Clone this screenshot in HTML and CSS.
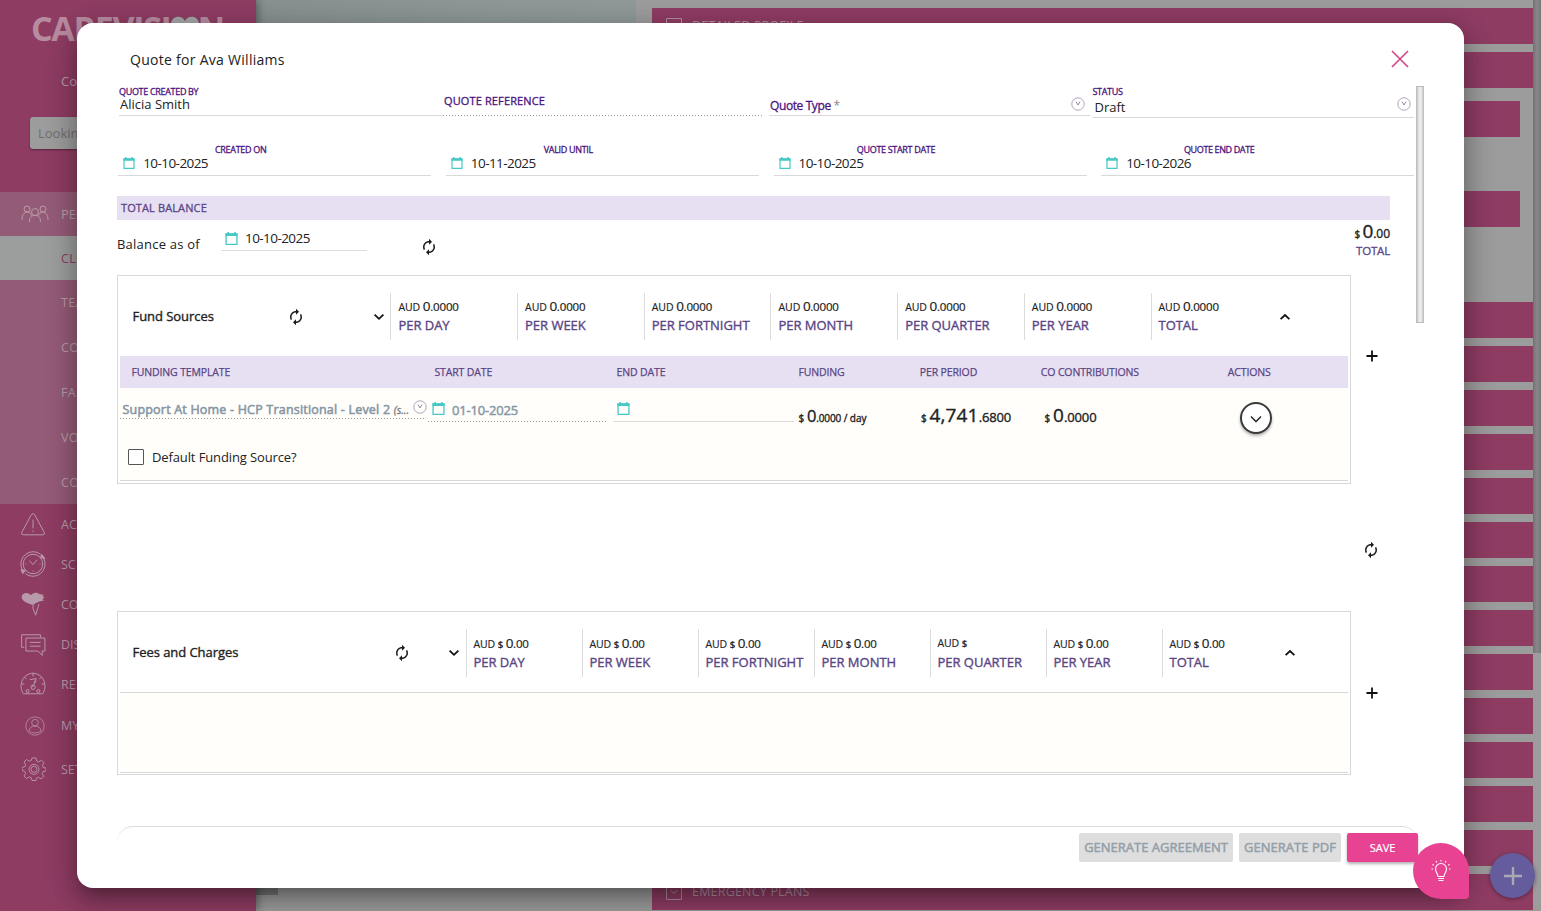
FILE: index.html
```html
<!DOCTYPE html>
<html lang="en">
<head>
<meta charset="utf-8">
<title>Quote for Ava Williams</title>
<link rel="stylesheet" href="styles.css">
</head>
<body>
<svg class="defs" width="0" height="0">
  <symbol id="cal" viewBox="0 0 12 12"><path d="M1 2h10v9.4H1z" fill="none" stroke="#45c8c6" stroke-width="1.2"/><path d="M.4 1.2h11.2v2.6H.4zM2.2 0h1.4v2H2.2zM8.4 0h1.4v2H8.4z" fill="#45c8c6"/></symbol>
  <symbol id="sync" viewBox="0 0 24 24"><path d="M12 6v3l4-4-4-4v3c-4.42 0-8 3.58-8 8 0 1.57.46 3.03 1.24 4.26L6.7 14.8A5.87 5.87 0 0 1 6 12c0-3.31 2.69-6 6-6zm6.76 1.74L17.3 9.2c.44.84.7 1.79.7 2.8 0 3.31-2.69 6-6 6v-3l-4 4 4 4v-3c4.42 0 8-3.58 8-8 0-1.57-.46-3.03-1.24-4.26z" fill="#1c1c1c"/></symbol>
  <symbol id="down" viewBox="0 0 12 8"><path d="M1.6 1.6 6 5.8l4.400-4.200" fill="none" stroke="#111" stroke-width="1.8"/></symbol>
  <symbol id="up" viewBox="0 0 12 8"><path d="M1.600 6.200 6 2l4.400 4.200" fill="none" stroke="#111" stroke-width="1.8"/></symbol>
  <symbol id="plus" viewBox="0 0 12 12"><path d="M6 .5v11M.5 6h11" stroke="#111" stroke-width="1.8"/></symbol>
  <symbol id="drop" viewBox="0 0 14 14"><circle cx="7" cy="7" r="6.200" fill="none" stroke="#a99ab8" stroke-width=".9"/><path d="M5 4.600 7 8l2-3.400" fill="none" stroke="#8b7a9c" stroke-width=".9"/></symbol>
  <symbol id="box" viewBox="0 0 16 16"><path d="M.5.5h15v15H.5z" fill="none" stroke="currentColor"/><path d="m4.500 6 3.500 3.500L11.500 6" fill="none" stroke="currentColor"/></symbol>
</svg>

<div class="app">
  <nav class="side">
    <div class="logo"><span>CAREVISI</span><svg width="32" height="26" viewBox="0 0 32 26"><path d="M16 26C8 20 2 14 2 8c0-8 11-10 14-3 3-7 14-5 14 3 0 6-6 12-14 18z" fill="#a3a6a6"/></svg><span>N</span></div>
    <div class="company">Co</div>
    <div class="search">Looking for</div>
    <div class="people">
      <svg width="28" height="20" viewBox="0 0 28 20"><g fill="none" stroke="currentColor"><circle cx="6" cy="5" r="3"/><circle cx="22" cy="5" r="3"/><circle cx="14" cy="8" r="3.500"/><path d="M1 16c0-5 2-8 5-8s4 2 5 4M27 16c0-5-2-8-5-8s-4 2-5 4M8.500 18c0-5 2-6.500 5.500-6.500s5.500 1.500 5.500 6.500"/></g></svg>
      <span>PEOPLE</span>
    </div>
    <div class="sub on">CLIENTS</div>
    <div class="sub">TEAM</div><div class="sub">CO</div><div class="sub">FA</div><div class="sub">VO</div><div class="sub">CO</div>
    <div class="menu">
      <div class="mi"><svg viewBox="0 0 24 24"><path d="M12 2.500Q13 2.500 13.600 3.500L22.500 20q.6 1.800-1.500 2H3q-2-.2-1.500-2L10.400 3.500Q11 2.500 12 2.500zM12 8v8M12 18v1.500"/></svg><span>AC</span></div>
      <div class="mi"><svg viewBox="0 0 24 24"><circle cx="12" cy="12" r="9"/><path d="M2 17A11.300 11.300 0 0 1 19 3M22 7A11.300 11.300 0 0 1 5 21M8.500 9l3.500 3.500L16 8M5 12h1M18 12h1M12 18v1"/><path d="m20 3 3 4-4-1zM1 17l4 1-2.500 3z" fill="currentColor"/></svg><span>SC</span></div>
      <div class="mi"><svg viewBox="0 0 24 24"><path d="M12 13C6 11 1.500 9 1.500 5.500 2 1 8 1 10 4c2-3 6-3 8-1l4 .5c-2 1-1 2 1 2.500-3 1-2 2-1 3-3 0-6 1-10 4z" fill="currentColor" stroke="none"/><path d="M12 13v3l2.500 6.500M14.500 22l3-10"/></svg><span>CO</span></div>
      <div class="mi"><svg viewBox="0 0 24 24"><path d="M4 15H1.500V3.500H19V6M5.500 6.500H23v12h-2.500v4l-4-4h-11zM9 10.500h10M9 14h10"/></svg><span>DIS</span></div>
      <div class="mi"><svg viewBox="0 0 24 24"><path d="M3 21C-1 15 .5 3 12 2c11.500 1 13 13 9 19zM12 2v3M1.500 12H4M20 12h2.500M4 5.500l2 2M20 5.500l-2 2M9 8l6-1-2 4M15 9l-4 6"/><circle cx="12" cy="15" r="2"/><circle cx="7" cy="18.500" r="1.400"/><circle cx="17" cy="18.500" r="1.400"/></svg><span>RE</span></div>
      <div class="mi"><svg class="sm" viewBox="0 0 24 24"><circle cx="12" cy="12" r="11"/><circle cx="12" cy="8" r="4"/><path d="M5 18c0-4 3-6 7-6s7 2 7 6c-3 3-11 3-14 0z"/></svg><span>MY</span></div>
      <div class="mi"><svg class="gear" viewBox="0 0 24 24"><path d="M10 1h4l.7 3 2 .9 2.800-1.700 2.500 2.600-1.600 2.800.8 2L24 11v3l-3 .7-.8 2 1.600 2.700-2.600 2.500-2.700-1.600-2 .8L14 23.500h-4l-.7-2.800-2-.8-2.800 1.600L2 19l1.600-2.700-.8-2L0 13.500v-3l2.800-.7.8-2L2 5l2.500-2.500 2.800 1.700 2-.9z"/><circle cx="12" cy="12.300" r="5"/><circle cx="12" cy="12.300" r="3"/></svg><span>SETTINGS</span></div>
    </div>
  </nav>
  <main class="page">
    <div class="map"><span class="chip"></span></div>
    <div class="acc">
      <div class="bar"><svg width="16" height="16"><use href="#box"/></svg><span>DETAILED PROFILE</span></div>
      <div class="bar"></div>
      <div class="bar inner g1"></div>
      <div class="bar inner g2"></div>
      <div class="bar g3"></div><div class="bar"></div><div class="bar"></div><div class="bar"></div><div class="bar"></div><div class="bar"></div><div class="bar"></div><div class="bar"></div><div class="bar"></div><div class="bar"></div><div class="bar"></div><div class="bar"></div><div class="bar"></div>
      <div class="bar"><svg width="16" height="16"><use href="#box"/></svg><span>EMERGENCY PLANS</span></div>
    </div>
    <div class="pagebar"><div></div></div>
  </main>
</div>

<section class="modal">
  <header class="head"><h1>Quote for Ava Williams</h1>
    <svg width="18" height="18" viewBox="0 0 18 18"><path d="m1 1 16 16M17 1 1 17" stroke="#d8468c" stroke-width="1.700"/></svg></header>
  <div class="scroll">
    <div class="body">
      <div class="row1">
        <div class="f"><label>QUOTE CREATED BY</label><b class="val">Alicia Smith</b></div>
        <div class="f dotted"><label class="mid">QUOTE REFERENCE</label></div>
        <div class="f qt"><label class="big">Quote Type <i>*</i></label><svg width="14" height="14"><use href="#drop"/></svg></div>
        <div class="f st"><div><label>STATUS</label><b class="val">Draft</b></div><svg width="14" height="14"><use href="#drop"/></svg></div>
      </div>
      <div class="row2">
        <div class="d"><label>CREATED ON</label><div class="dt"><svg width="12" height="12"><use href="#cal"/></svg>10-10-2025</div></div>
        <div class="d"><label>VALID UNTIL</label><div class="dt"><svg width="12" height="12"><use href="#cal"/></svg>10-11-2025</div></div>
        <div class="d"><label>QUOTE START DATE</label><div class="dt"><svg width="12" height="12"><use href="#cal"/></svg>10-10-2025</div></div>
        <div class="d end"><label>QUOTE END DATE</label><div class="dt"><svg width="12" height="12"><use href="#cal"/></svg>10-10-2026</div></div>
      </div>
      <div class="tb">TOTAL BALANCE</div>
      <div class="bal">
        <span class="asof">Balance as of</span>
        <div class="dt bd"><svg width="13" height="13"><use href="#cal"/></svg>10-10-2025</div>
        <svg class="bs" width="18" height="18"><use href="#sync"/></svg>
        <div class="tot"><div class="m lg"><small>$</small> <b>0</b><em>.00</em></div><div class="tl">TOTAL</div></div>
      </div>

      <div class="wrap">
        <div class="card c1">
          <div class="ch">
            <h2>Fund Sources</h2><svg class="sy" width="18" height="18"><use href="#sync"/></svg><svg class="dn" width="12" height="8"><use href="#down"/></svg>
            <div class="p"><div class="a">AUD <b>0</b><em>.0000</em></div><span>PER DAY</span></div>
            <div class="p"><div class="a">AUD <b>0</b><em>.0000</em></div><span>PER WEEK</span></div>
            <div class="p"><div class="a">AUD <b>0</b><em>.0000</em></div><span>PER FORTNIGHT</span></div>
            <div class="p"><div class="a">AUD <b>0</b><em>.0000</em></div><span>PER MONTH</span></div>
            <div class="p"><div class="a">AUD <b>0</b><em>.0000</em></div><span>PER QUARTER</span></div>
            <div class="p"><div class="a">AUD <b>0</b><em>.0000</em></div><span>PER YEAR</span></div>
            <div class="p"><div class="a">AUD <b>0</b><em>.0000</em></div><span>TOTAL</span></div>
            <svg class="u" width="12" height="8"><use href="#up"/></svg>
          </div>
          <div class="th"><span>FUNDING TEMPLATE</span><span>START DATE</span><span>END DATE</span><span>FUNDING</span><span>PER PERIOD</span><span>CO CONTRIBUTIONS</span><span>ACTIONS</span></div>
          <div class="tr">
            <div class="cells">
              <div class="sel"><span>Support At Home - HCP Transitional - Level 2 <i>(s...</i></span><svg width="14" height="14"><use href="#drop"/></svg></div>
              <div class="sd"><svg width="13" height="13"><use href="#cal"/></svg>01-10-2025</div>
              <div class="sd ed"><svg width="13" height="13"><use href="#cal"/></svg></div>
              <div class="m x1"><small>$</small> <b>0</b><em>.0000 / day</em></div>
              <div class="m x2"><small>$</small> <b>4,741</b><em>.6800</em></div>
              <div class="m x3"><small>$</small> <b>0</b><em>.0000</em></div>
              <div class="round"><svg width="12" height="8" viewBox="0 0 12 8"><path d="m1 1.500 5 5 5-5" fill="none" stroke="#333" stroke-width="1.600"/></svg></div>
            </div>
            <div class="chk"><span></span>Default Funding Source?</div>
          </div>
        </div>
        <svg class="pl" width="12" height="12"><use href="#plus"/></svg>
      </div>
      <div class="mids"><svg width="18" height="18"><use href="#sync"/></svg></div>
      <div class="wrap">
        <div class="card c2">
          <div class="ch">
            <h2>Fees and Charges</h2><svg class="sy" width="18" height="18"><use href="#sync"/></svg><svg class="dn" width="12" height="8"><use href="#down"/></svg>
            <div class="p"><div class="a">AUD <u>$</u> <b>0</b><em>.00</em></div><span>PER DAY</span></div>
            <div class="p"><div class="a">AUD <u>$</u> <b>0</b><em>.00</em></div><span>PER WEEK</span></div>
            <div class="p"><div class="a">AUD <u>$</u> <b>0</b><em>.00</em></div><span>PER FORTNIGHT</span></div>
            <div class="p"><div class="a">AUD <u>$</u> <b>0</b><em>.00</em></div><span>PER MONTH</span></div>
            <div class="p"><div class="a">AUD <u>$</u></div><span>PER QUARTER</span></div>
            <div class="p"><div class="a">AUD <u>$</u> <b>0</b><em>.00</em></div><span>PER YEAR</span></div>
            <div class="p"><div class="a">AUD <u>$</u> <b>0</b><em>.00</em></div><span>TOTAL</span></div>
            <svg class="u" width="12" height="8"><use href="#up"/></svg>
          </div>
          <div class="empty"></div>
        </div>
        <svg class="pl" width="12" height="12"><use href="#plus"/></svg>
      </div>
    </div>
    <div class="thumb"></div>
  </div>
  <footer class="foot"><button class="b1">GENERATE AGREEMENT</button><button class="b2">GENERATE PDF</button><button class="b3">SAVE</button></footer>
</section>
<div class="hint"><svg width="24" height="24" viewBox="0 0 24 24" fill="none" stroke="#fff" stroke-width="1.100"><path d="M9 17.500c0-3-2.500-4-2.500-7.500a5.500 5.500 0 0 1 11 0c0 3.500-2.500 4.500-2.500 7.500zM9 19.500h6M9.500 21.500h5M12 1V2.500M7 2l.8 1.500M17 2l-.8 1.500M3.500 5.500l1.300.8M20.500 5.500l-1.300.8M2.500 10H4M20 10h1.500"/></svg></div>
<div class="add"><svg width="18" height="18" viewBox="0 0 18 18"><path d="M9 0v18M0 9h18" stroke="#a9a9b4" stroke-width="2.400"/></svg></div>
</body>
</html>
```
FILE: styles.css
```css
* { box-sizing: border-box; }
body { margin: 0; width: 1541px; height: 911px; overflow: hidden; position: relative; background: #9c9c9c; font-family: "Open Sans", sans-serif; color: #222; font-size: 13px; }
svg { display: block; flex: none; }
.defs { position: absolute; }
b, i, em, u, small { font-weight: 400; font-style: normal; text-decoration: none; }

/* page behind the dialog */
.app { display: flex; height: 911px; }
.side { width: 256px; background: #8e3c62; color: #b99aaa; box-shadow: 2px 0 8px rgba(0,0,0,.35); white-space: nowrap; z-index: 1; }
.logo { display: flex; align-items: center; height: 32px; margin: 12px 0 0 31px; font-size: 34px; font-weight: 700; line-height: 32px; letter-spacing: -1.300px; color: #b78ba0; }
.logo svg { margin: 2px -3px 0 -2px; }
.company { margin: 28px 0 0 61px; line-height: 18px; }
.search { margin: 27px 0 0 30px; width: 196px; height: 32px; line-height: 32px; padding-left: 8px; background: #9c9c9c; border-radius: 3px; color: #6e6e6e; box-shadow: 0 1px 2px rgba(0,0,0,.4); }
.people { margin-top: 43px; height: 44px; background: #945b77; display: flex; align-items: center; padding-left: 21px; gap: 12px; }
.sub { height: 45px; line-height: 45px; padding-left: 61px; background: #945b77; font-size: 12.500px; letter-spacing: .3px; }
.sub.on { height: 44px; line-height: 45px; background: #9c9e9d; color: #8e3c62; }
.sub:nth-child(10) { height: 44px; }
.menu { font-size: 12.500px; }
.mi { display: flex; align-items: center; height: 40px; padding-left: 20px; gap: 15px; }
.mi svg { width: 26px; height: 26px; fill: none; stroke: currentColor; stroke-width: .9; }
.mi svg.sm { width: 20px; height: 20px; margin: 0 1.500px 0 4.500px; }
.mi svg.gear { width: 24px; height: 24px; margin-left: 2px; }
.mi:nth-child(6) { height: 43px; }
.mi:nth-child(7) { height: 44px; }
.page { flex: 1; display: flex; }
.map { width: 396px; background: linear-gradient(90deg, #87908f, #8c9796 60%, #8f9998) 0 0 / 380px 400px no-repeat; display: flex; align-items: flex-end; }
.chip { width: 22px; height: 18px; margin-bottom: 16px; background: #777; }
.acc { width: 881px; padding-top: 8px; display: flex; flex-direction: column; gap: 8px; }
.bar { flex: none; height: 36px; background: #8f3c63; color: #b28fa0; display: flex; align-items: center; padding-left: 14px; gap: 10px; font-size: 12.500px; letter-spacing: .2px; line-height: 16px; }
.bar span { margin-top: -1px; }
.bar.inner { width: 868px; }
.g1 { margin-top: 5px; }
.g2 { margin-top: 46px; }
.g3 { margin-top: 67px; }
.pagebar { width: 8px; background: #9c9c9c; }
.pagebar div { height: 653px; background: linear-gradient(90deg, #707070, #858585 40%, #858585 60%, #777); }

/* dialog */
.modal { position: absolute; left: 77px; top: 23px; width: 1387px; height: 865px; background: #fff; border-radius: 16px; z-index: 2; box-shadow: 0 11px 15px -7px rgba(0,0,0,.25), 0 14px 30px 3px rgba(0,0,0,.18), 0 5px 26px 4px rgba(0,0,0,.14); }
.head { display: flex; justify-content: space-between; height: 63px; padding: 27px 55px 0 53px; }
.head h1 { margin: 0; font-size: 14px; font-weight: 400; line-height: 20px; letter-spacing: .28px; }
.scroll { display: flex; height: 740px; margin-left: 40px; }
.body { width: 1299px; }
.thumb { width: 8px; height: 237px; background: linear-gradient(90deg, #b4b4b4, #e6e6e6 35%, #f0f0f0 60%, #b8b8b8); border: solid #bcbcbc; border-width: 1px 0; }
label { display: block; color: #4b1380; font-size: 9px; line-height: 11px; letter-spacing: -.32px; -webkit-text-stroke: .3px #4b1380; white-space: nowrap; }
.row1 { display: grid; grid-template-columns: 324px 326px 323.500px 321px; margin-left: 2px; height: 57px; align-items: start; }
.f { height: 30px; border-bottom: 1px solid #d9d9d9; }
.val { display: block; font-size: 13px; line-height: 15px; padding-left: 1px; }
.f.dotted { width: 320px; border: 0; background: repeating-linear-gradient(90deg, #999 0 1px, transparent 1px 3px) 0 29px / 100% 1px no-repeat; }
label.mid { font-size: 11px; line-height: 14px; padding: 8px 0 0 1px; letter-spacing: .13px; }
.qt { width: 321px; display: flex; justify-content: space-between; padding: 11px 5px 0 1px; }
label.big { font-size: 12px; line-height: 18px; letter-spacing: -.4px; }
label i { color: #888; -webkit-text-stroke: 0; }
.st { height: 32px; display: flex; justify-content: space-between; padding-right: 3px; }
.st .val { padding: 3px 0 0 2px; }
.st svg { margin-top: 11px; }
.row2 { display: grid; grid-template-columns: repeat(4, 313px); column-gap: 14.670px; margin-left: 1.200px; }
.d { height: 33px; border-bottom: 1px solid #d9d9d9; padding-top: 1px; }
.d label { width: 245px; line-height: 12px; text-align: center; }
.d.end label { width: 236px; letter-spacing: -.38px; }
.dt { display: flex; align-items: center; font-size: 13.500px; line-height: 14px; letter-spacing: -.56px; padding-left: 5px; gap: 8px; }
.tb { margin-top: 20px; width: 1273px; height: 24px; line-height: 24px; padding-left: 4px; background: #e7e0f2; color: #5a4585; font-size: 11px; -webkit-text-stroke: .3px #5a4585; letter-spacing: .12px; }
.bal { display: flex; width: 1273px; height: 55px; }
.asof { width: 104px; padding-top: 15px; line-height: 18px; letter-spacing: .22px; }
.bd { width: 146px; height: 31px; border-bottom: 1px solid #ddd; padding: 6px 0 0 4px; gap: 7px; }
.bs { margin: 18px 0 0 52.500px; }
.tot { margin-left: auto; text-align: right; color: #5a4585; font-size: 11.500px; letter-spacing: -.2px; }
.tl { line-height: 16px; -webkit-text-stroke: .3px; margin-top: 1px; }
.m { color: #222; white-space: nowrap; line-height: 22px; letter-spacing: -.3px; -webkit-text-stroke: .35px #222; }
.m small { font-size: 10px; }
.m b { font-size: 19px; }
.m em { font-size: 13px; }
.lg { line-height: 22px; height: 22px; }
.lg em { font-size: 12px; letter-spacing: 0; }
.wrap { display: flex; align-items: center; gap: 14.500px; }
.card { width: 1234px; border: 1px solid #d8d8d8; padding: 0 2px; display: flex; flex-direction: column; }
.c1 { height: 209px; }
.c2 { height: 164px; }
.ch { display: flex; height: 80px; padding: 17px 0 0 12.500px; }
.ch h2 { margin: 13px 0 0; font-size: 13px; font-weight: 400; line-height: 20px; width: 154.500px; -webkit-text-stroke: .35px #222; letter-spacing: -.05px; white-space: nowrap; }
.c2 .ch h2 { width: 260.500px; }
.sy { margin-top: 14.500px; }
.dn { margin: 19.500px 5.500px 0 auto; }
.p { width: 126.700px; height: 47px; border-left: 1px solid #dcdcdc; padding: 5px 0 0 7px; flex: none; white-space: nowrap; }
.c2 .p { width: 116px; height: 48px; }
.a { font-size: 10.500px; line-height: 17px; height: 17px; letter-spacing: -.05px; -webkit-text-stroke: .15px #222; }
.c2 .a { position: relative; top: 1px; letter-spacing: -.1px; }
.a b { font-size: 13.500px; letter-spacing: -.4px; -webkit-text-stroke: .2px; }
.a em { font-size: 11.500px; -webkit-text-stroke: .2px; letter-spacing: -.15px; }
.a u { font-weight: 600; font-size: 9.500px; }
.p span { display: block; font-size: 13px; line-height: 18px; color: #5a4585; -webkit-text-stroke: .35px #5a4585; letter-spacing: -.02px; margin-top: 1px; }
.c2 .p span { margin-top: 2px; }
.u { margin: 19.500px 57.500px 0 0; width: 12px; }
.c1 .p:nth-last-of-type(1) { width: 128px; }
.c2 .p:nth-last-of-type(1) { width: 122px; }
.c2 .u { margin-right: 52.500px; }
.th { flex: none; height: 32px; display: grid; grid-template-columns: 303px 182px 182px 121.300px 121px 187px 1fr; background: #e7e0f2; padding-left: 11.500px; line-height: 33px; font-size: 10.500px; color: #5a4585; -webkit-text-stroke: .25px #5a4585; letter-spacing: -.14px; }
.tr { flex: none; height: 93px; background: #fffefb; border-bottom: 1px solid #d8d8d8; }
.cells { display: flex; height: 56px; }
.sel { width: 305px; height: 31px; background: repeating-linear-gradient(90deg, #999 0 1px, transparent 1px 3px) 0 30px / 100% 1px no-repeat; display: flex; padding: 12px 0 0 2.500px; gap: 4px; color: #8797a3; font-size: 12.500px; line-height: 20px; white-space: nowrap; -webkit-text-stroke: .55px; }
.sel span { width: 287.500px; letter-spacing: .2px; }
.sel i { font-style: italic; font-size: 10.500px; color: #777; letter-spacing: 0; -webkit-text-stroke: .3px; }
.sd { width: 180px; height: 34px; margin-left: 3px; background: repeating-linear-gradient(90deg, #999 0 1px, transparent 1px 3px) 0 33px / 100% 1px no-repeat; display: flex; gap: 7px; padding: 14px 0 0 4px; color: #8797a3; font-size: 13px; line-height: 17px; letter-spacing: -.18px; -webkit-text-stroke: .45px; }
.ed { width: 181px; margin-left: 5px; background: none; border-bottom: 1px solid #ddd; }
.x1 { width: 122.500px; margin-left: 4.500px; padding-top: 17px; }
.x1 b { font-size: 16.500px; } .x1 em { font-size: 10px; letter-spacing: -.08px; }
.x2 { width: 123.500px; padding-top: 16px; }
.x2 b, .x3 b { letter-spacing: .15px; }
.x2 em, .x3 em { letter-spacing: -.15px; }
.x3 { width: 195.500px; padding-top: 16px; }
.round { width: 32px; height: 32px; border: 2px solid #3a3a3a; border-radius: 50%; background: #fff; margin-top: 14px; display: flex; align-items: center; justify-content: center; box-shadow: 0 2px 3px rgba(0,0,0,.3); }
.round svg { margin-top: 2px; }
.chk { display: flex; align-items: center; gap: 8px; padding: 0 0 0 8px; height: 26px; letter-spacing: -.12px; font-size: 13px; }
.chk span { width: 16px; height: 16px; border: 1px solid #555; border-radius: 1px; background: #fff; }
.c1 + .pl { margin-top: -47px; }
.c2 + .pl { margin-top: -1px; }
.mids { height: 127px; padding: 57px 0 0 1245px; }
.empty { height: 81px; background: #fffefb; border: solid #d8d8d8; border-width: 1px 0; }
.foot { margin: 0 46px 0 40px; height: 46px; border-top: 1px solid #dcdcdc; border-radius: 16px 16px 0 0; display: flex; justify-content: flex-end; gap: 6px; padding-top: 6px; }
button { height: 29px; border: 0; border-radius: 2px; padding: 0 0 1px; font-family: inherit; font-size: 13px; background: #dedede; color: #93a0a9; -webkit-text-stroke: .5px; white-space: nowrap; }
.b1 { width: 154px; letter-spacing: 0; }
.b2 { width: 102px; letter-spacing: .02px; }
.b3 { width: 71px; background: #e84393; color: #fff; font-size: 11px; -webkit-text-stroke: .2px; box-shadow: 0 2px 3px rgba(0,0,0,.3); }
.hint { position: absolute; z-index: 4; left: 1413px; top: 843px; width: 56px; height: 56px; border-radius: 50% 50% 4px 50%; background: #e84393; display: flex; align-items: center; justify-content: center; }
.add { position: absolute; z-index: 3; left: 1490px; top: 853px; width: 45px; height: 45px; border-radius: 50%; background: #645c9c; display: flex; align-items: center; justify-content: center; box-shadow: 0 1px 4px rgba(0,0,0,.4); }
```
